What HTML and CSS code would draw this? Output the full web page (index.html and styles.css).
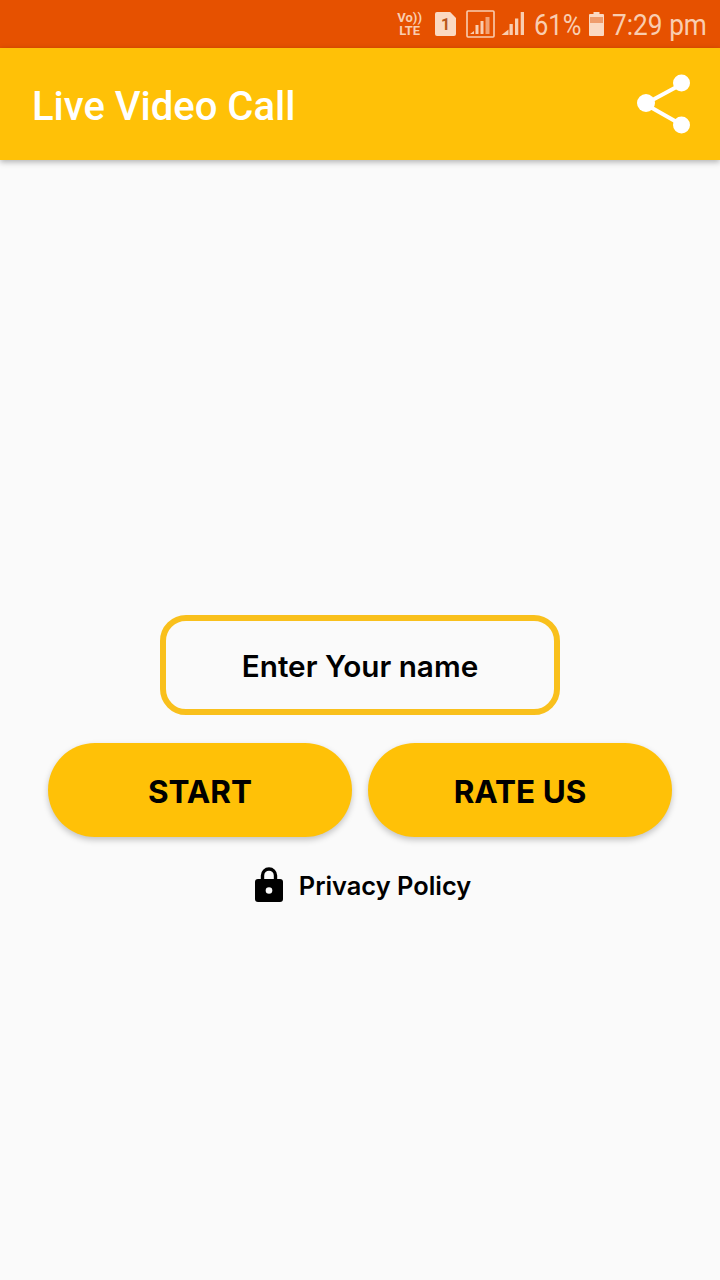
FILE: index.html
```html
<!DOCTYPE html>
<html lang="en">
<head>
    <meta charset="UTF-8">
    <meta name="viewport" content="width=device-width, initial-scale=1.0">
    <title>Live Video Call</title>
    <link rel="stylesheet" href="styles.css">
</head>
<body>
    <div class="status-bar">
        <div class="volte"><span>Vo))</span><span>LTE</span></div>
        <div class="sim">1</div>
        <svg class="signal-box" width="29" height="28" viewBox="0 0 29 28">
            <rect x="1" y="1" width="27" height="26" rx="1" fill="none" stroke="#f9cdb0" stroke-width="1.6"/>
            <path d="M4 24l4-3v3zM9.500 15h3v9h-3zM14.500 11h3v13h-3z" fill="#f9cdb0"/>
            <path d="M19.500 7h4v17h-4z" fill="#f3a273"/>
        </svg>
        <svg class="signal" width="25" height="24" viewBox="0 0 25 24">
            <path d="M1.500 23l7-5.500V23zM9.500 12h3.300v11H9.500zM15 6.500h3.300V23H15zM20.700 0H24v23h-3.300z" fill="#f9cdb0"/>
        </svg>
        <span class="status-text percent">61%</span>
        <svg class="battery" width="15" height="24" viewBox="0 0 15 24">
            <path d="M4.500 0h6v2h3.500a1 1 0 0 1 1 1v20a1 1 0 0 1-1 1H1a1 1 0 0 1-1-1V3a1 1 0 0 1 1-1h3.500z" fill="#fbd9c2"/>
            <path d="M1 5h13v6H1z" fill="#ef9c6c"/>
        </svg>
        <span class="status-text time">7:29 pm</span>
    </div>

    <div class="app-bar">
        <div class="title">Live Video Call</div>
        <svg class="share" width="56" height="60" viewBox="0 0 56 60">
            <path d="M46 10L9 30l37 21" fill="none" stroke="#fff" stroke-width="4"/>
            <circle cx="45.500" cy="9" r="8.500" fill="#fff"/>
            <circle cx="10" cy="29" r="9" fill="#fff"/>
            <circle cx="45.500" cy="51" r="8.500" fill="#fff"/>
        </svg>
    </div>

    <div class="content">
        <div class="name-input">Enter Your name</div>
        <div class="buttons">
            <button class="btn">START</button>
            <button class="btn">RATE US</button>
        </div>
        <div class="privacy">
            <svg width="28" height="36" viewBox="0 0 28 36">
                <path d="M7.500 14V9.500a6.500 6.500 0 0 1 13 0V14" fill="none" stroke="#000" stroke-width="3.400"/>
                <path d="M3 13h22a3 3 0 0 1 3 3v17a3 3 0 0 1-3 3H3a3 3 0 0 1-3-3V16a3 3 0 0 1 3-3z" fill="#000"/>
                <circle cx="14" cy="24.500" r="3.300" fill="#fafafa"/>
            </svg>
            <span class="privacy-text">Privacy Policy</span>
        </div>
    </div>
</body>
</html>
```
FILE: styles.css
```css
body, html {
    margin: 0;
    padding: 0;
    height: 100%;
    background: #fafafa;
    font-family: 'Inter', 'Noto Sans', sans-serif;
}

body {
    display: flex;
    flex-direction: column;
    overflow: hidden;
}

.status-bar {
    height: 48px;
    background: #e65100;
    color: #f9cdb0;
    display: flex;
    align-items: center;
    justify-content: flex-end;
    padding-right: 12px;
    font-family: 'Roboto', sans-serif;
}

.volte {
    display: flex;
    flex-direction: column;
    align-items: center;
    font-size: 13px;
    font-weight: 700;
    line-height: 13px;
    margin-right: 13px;
}

.sim {
    width: 21px;
    height: 24px;
    background: #fbd9c2;
    color: #b8561c;
    font-size: 16px;
    font-weight: 700;
    line-height: 26px;
    text-align: center;
    border-radius: 2px;
    clip-path: polygon(0 0, 72% 0, 100% 25%, 100% 100%, 0 100%);
    margin-right: 10px;
}

.signal-box {
    margin-right: 5px;
}

.signal {
    margin-right: 9px;
}

/* status bar font is narrower than Roboto */
.status-text {
    font-size: 30px;
    white-space: nowrap;
    transform-origin: left center;
}

.percent {
    width: 47px;
    transform: scaleX(0.85);
    margin-right: 8px;
}

.battery {
    margin-right: 8px;
}

.time {
    width: 96px;
    transform: scaleX(0.875);
}

.app-bar {
    height: 112px;
    background: #ffc107;
    display: flex;
    align-items: center;
    justify-content: space-between;
    padding: 0 28px 0 32px;
    box-shadow: 0 2px 6px rgba(0, 0, 0, 0.3);
    z-index: 1;
}

.title {
    color: #ffffff;
    font-family: 'Roboto', sans-serif;
    font-size: 40px;
    font-weight: 500;
    padding-top: 4px;
}

.content {
    display: flex;
    flex-direction: column;
    align-items: center;
    padding-top: 455px;
}

.name-input {
    width: 400px;
    height: 100px;
    box-sizing: border-box;
    border: 6px solid #f9c01c;
    border-radius: 26px;
    padding-top: 2px;
    display: flex;
    align-items: center;
    justify-content: center;
    font-size: 29.700px;
    font-weight: 600;
    color: #000;
}

.buttons {
    display: flex;
    gap: 16px;
    margin-top: 28px;
}

.btn {
    width: 304px;
    height: 94px;
    border: none;
    border-radius: 47px;
    padding: 2px 0 0;
    background: #ffc107;
    color: #000;
    font-family: inherit;
    font-size: 31.500px;
    font-weight: 700;
    box-shadow: 0 3px 6px rgba(0, 0, 0, 0.22);
}

.privacy {
    display: flex;
    align-items: center;
    gap: 16px;
    margin: 29px 0 0 6px;
    font-size: 25.400px;
    font-weight: 600;
    color: #000;
}

.privacy-text {
    padding-top: 2px;
}
```
